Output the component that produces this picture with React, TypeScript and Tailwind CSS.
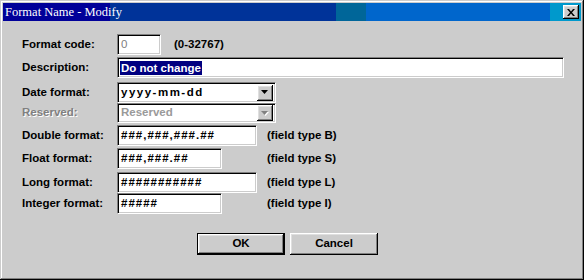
import React from "react";

const sunken =
    "border border-t-[#808080] border-l-[#808080] border-b-white border-r-white shadow-[inset_1px_1px_0_#000,inset_-1px_-1px_0_#cccccc]";
const raised =
    "shadow-[inset_-1px_-1px_0_#000,inset_1px_1px_0_#fff,inset_-2px_-2px_0_#808080,inset_2px_2px_0_#dfdfdf]";

function Label({ children, disabled }: { children: React.ReactNode; disabled?: boolean }) {
    return (
        <div
            className={
                "w-[95px] shrink-0 " +
                (disabled ? "text-[#808080] [text-shadow:1px_1px_0_#fff]" : "text-black")
            }
        >
            {children}
        </div>
    );
}

function Field({ width, children, muted }: { width: string; children?: React.ReactNode; muted?: boolean }) {
    return (
        <div
            className={`${width} h-full bg-white ${sunken} flex items-center pl-[3px] ${
                muted ? "text-[#808080] font-normal" : "tracking-[1px]"
            }`}
        >
            {children}
        </div>
    );
}

function Arrow({ disabled }: { disabled?: boolean }) {
    return (
        <div className={`w-[16px] h-[16px] bg-[#cccccc] ${raised} flex items-center justify-center`}>
            <svg width="8" height="5" viewBox="0 0 8 5">
                {disabled && <polygon points="1,1 8,1 4.5,5" fill="#fff" />}
                <polygon points="0,0 7,0 3.5,4" fill={disabled ? "#808080" : "#000"} />
            </svg>
        </div>
    );
}

function Combo({ value, disabled }: { value: string; disabled?: boolean }) {
    return (
        <div className={`w-[159px] h-full bg-white ${sunken} flex items-center justify-between pl-[3px] pr-[2px]`}>
            <span className={disabled ? "text-[#9a9a9a]" : "tracking-[1.5px]"}>{value}</span>
            <Arrow disabled={disabled} />
        </div>
    );
}

export default function App() {
    return (
        <div className="w-[584px] h-[280px] bg-[#cccccc] p-[3px] flex flex-col shadow-[inset_-1px_-1px_0_#000,inset_1px_1px_0_#cccccc,inset_-2px_-2px_0_#808080,inset_2px_2px_0_#fff] font-['Liberation_Sans',Arial,sans-serif] text-[11.5px] font-bold">
            {/* title bar */}
            <div className="h-[18px] shrink-0 flex items-center justify-between pl-[2px] pr-[2px] bg-[linear-gradient(90deg,#000099_0,#000099_107px,#003399_107px,#003399_333px,#006699_333px,#006699_363px,#0066cc_363px,#0066cc_547px,#0099cc_547px)]">
                <span className="font-['Liberation_Serif',serif] font-normal text-[12.5px] text-white leading-none">
                    Format Name - Modify
                </span>
                <button className={`w-[16px] h-[14px] bg-[#cccccc] ${raised} flex items-center justify-center`}>
                    <svg width="8" height="7" viewBox="0 0 8 7">
                        <path d="M0 0 L2 0 L4 2.5 L6 0 L8 0 L5 3.5 L8 7 L6 7 L4 4.5 L2 7 L0 7 L3 3.5 Z" fill="#000" />
                    </svg>
                </button>
            </div>

            {/* body */}
            <div className="flex flex-col pl-[19px] pt-[13px]">
                <div className="flex items-center h-[21px]">
                    <Label>Format code:</Label>
                    <Field width="w-[44px]" muted>
                        0
                    </Field>
                    <span className="ml-[13px]">(0-32767)</span>
                </div>

                <div className="flex items-center h-[21px] mt-[2px]">
                    <Label>Description:</Label>
                    <div className={`w-[447px] h-full bg-white ${sunken} flex items-center pl-[2px]`}>
                        <span className="bg-[#000080] text-white px-[1px] leading-[14px]">Do not change</span>
                    </div>
                </div>

                <div className="flex items-center h-[21px] mt-[4px]">
                    <Label>Date format:</Label>
                    <Combo value="yyyy-mm-dd" />
                </div>

                <div className="flex items-center h-[20px] mt-[0px]">
                    <Label disabled>Reserved:</Label>
                    <Combo value="Reserved" disabled />
                </div>

                <div className="flex items-center h-[21px] mt-[2px]">
                    <Label>Double format:</Label>
                    <Field width="w-[140px]">###,###,###.##</Field>
                    <span className="ml-[10px]">(field type B)</span>
                </div>

                <div className="flex items-center h-[21px] mt-[2px]">
                    <Label>Float format:</Label>
                    <Field width="w-[105px]">###,###.##</Field>
                    <span className="ml-[45px]">(field type S)</span>
                </div>

                <div className="flex items-center h-[21px] mt-[3px]">
                    <Label>Long format:</Label>
                    <Field width="w-[140px]">###########</Field>
                    <span className="ml-[10px]">(field type L)</span>
                </div>

                <div className="flex items-center h-[21px] mt-[0px]">
                    <Label>Integer format:</Label>
                    <Field width="w-[105px]">#####</Field>
                    <span className="ml-[45px]">(field type I)</span>
                </div>

                <div className="flex gap-[5px] mt-[19px] ml-[175px]">
                    <button className="w-[88px] h-[22px] border border-black bg-[#cccccc] flex items-center justify-center">
                        <span className={`w-full h-full ${raised} flex items-center justify-center`}>OK</span>
                    </button>
                    <button className={`w-[88px] h-[22px] bg-[#cccccc] ${raised} flex items-center justify-center`}>
                        Cancel
                    </button>
                </div>
            </div>
        </div>
    );
}
